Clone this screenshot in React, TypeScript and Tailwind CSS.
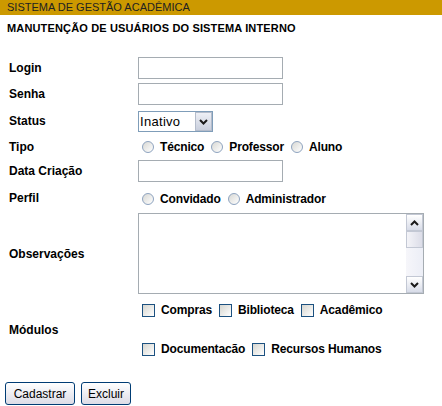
import React from "react";

const font = { fontFamily: '"Liberation Sans", Arial, sans-serif' };

function Radio() {
  return (
    <span className="inline-block w-[12px] h-[12px] rounded-full border border-[#8ea3bf] bg-gradient-to-br from-[#d8d8d4] to-white shrink-0" />
  );
}

function Check() {
  return (
    <span className="inline-block w-[13px] h-[13px] border border-[#1c5180] bg-gradient-to-br from-[#d6d6d0] to-white shrink-0" />
  );
}

function Chevron({ up }: { up?: boolean }) {
  return (
    <svg width="9" height="6" viewBox="0 0 9 6">
      <polyline
        points={up ? "1,5 4.5,1.5 8,5" : "1,1 4.5,4.5 8,1"}
        fill="none"
        stroke="#1a1a1a"
        strokeWidth="2"
      />
    </svg>
  );
}

function Label({ children }: { children: React.ReactNode }) {
  return <div className="pl-[9px] text-[12px] font-bold text-black">{children}</div>;
}

function TextBox() {
  return <div className="w-[145px] h-[22px] border border-[#a5acb2] bg-white" />;
}

function Opt({ children, kind }: { children: React.ReactNode; kind: "r" | "c" }) {
  return (
    <span className="inline-flex items-center">
      {kind === "r" ? <Radio /> : <Check />}
      <span className="ml-[6px] text-[12px] font-bold text-black tracking-[-0.15px]">{children}</span>
    </span>
  );
}

export default function App() {
  return (
    <div className="w-[442px] h-[406px] bg-white overflow-hidden" style={font}>
      <div className="h-[15px] bg-[#cc9900] pl-[7px] text-[11px] leading-[15px] text-[#222]">
        SISTEMA DE GESTÃO ACADÊMICA
      </div>
      <div className="pl-[7px] pt-[6px] h-[40px] text-[11px] font-bold leading-[15px] text-black tracking-[0.15px]">
        MANUTENÇÃO DE USUÁRIOS DO SISTEMA INTERNO
      </div>
      <div className="grid grid-cols-[138px_1fr]">
        <div className="h-[26px] flex items-center"><Label>Login</Label></div>
        <div className="h-[26px] flex items-center"><TextBox /></div>

        <div className="h-[26px] flex items-center"><Label>Senha</Label></div>
        <div className="h-[26px] flex items-center"><TextBox /></div>

        <div className="h-[27px] flex items-center"><Label>Status</Label></div>
        <div className="h-[27px] flex items-center pt-[2px]">
          <div className="w-[75px] h-[21px] border border-[#7f9db9] bg-white flex">
            <span className="flex-1 pl-[1px] text-[13px] leading-[19px] text-black tracking-[0.3px]">Inativo</span>
            <span className="w-[17px] h-[19px] border border-[#b4bccb] bg-gradient-to-b from-[#eef0f6] to-[#c9cfdd] flex items-center justify-center">
              <Chevron />
            </span>
          </div>
        </div>

        <div className="h-[25px] flex items-center"><Label>Tipo</Label></div>
        <div className="h-[25px] flex items-center pl-[4px] gap-[7px]">
          <Opt kind="r">Técnico</Opt>
          <Opt kind="r">Professor</Opt>
          <Opt kind="r">Aluno</Opt>
        </div>

        <div className="h-[24px] flex items-center"><Label>Data Criação</Label></div>
        <div className="h-[24px] flex items-center"><TextBox /></div>

        <div className="h-[30px] flex items-center"><Label>Perfil</Label></div>
        <div className="h-[30px] flex items-center pl-[4px] gap-[7px] pt-[2px]">
          <Opt kind="r">Convidado</Opt>
          <Opt kind="r">Administrador</Opt>
        </div>

        <div className="h-[81px] flex items-center"><Label>Observações</Label></div>
        <div className="h-[81px] flex">
          <div className="w-[286px] h-[81px] border border-[#a5acb2] bg-white flex justify-end">
            <div className="w-[17px] flex flex-col">
              <div className="h-[17px] border border-[#c3c8d4] bg-gradient-to-b from-white to-[#d8dce8] flex items-center justify-center">
                <Chevron up />
              </div>
              <div className="h-[17px] border border-[#c3c8d4] bg-gradient-to-r from-[#f4f4f8] to-[#dcdde8]" />
              <div className="flex-1 bg-gradient-to-r from-[#f6f6fa] to-[#eceef6]" />
              <div className="h-[17px] border border-[#c3c8d4] bg-gradient-to-b from-white to-[#d8dce8] flex items-center justify-center">
                <Chevron />
              </div>
            </div>
          </div>
        </div>

        <div className="h-[71px] flex items-center"><Label>Módulos</Label></div>
        <div className="h-[71px] flex flex-col pt-[6px] pl-[4px] gap-[19px]">
          <div className="h-[20px] flex items-center gap-[7px]">
            <Opt kind="c">Compras</Opt>
            <Opt kind="c">Biblioteca</Opt>
            <Opt kind="c">Acadêmico</Opt>
          </div>
          <div className="h-[20px] flex items-center gap-[7px]">
            <Opt kind="c">Documentacão</Opt>
            <Opt kind="c">Recursos Humanos</Opt>
          </div>
        </div>
      </div>
      <div className="flex gap-[6px] pl-[5px] pt-[17px]">
        <button className="w-[70px] h-[23px] border border-[#003c74] rounded-[3px] bg-gradient-to-b from-white to-[#dcdce6] text-[12px] text-black">
          Cadastrar
        </button>
        <button className="w-[50px] h-[23px] border border-[#003c74] rounded-[3px] bg-gradient-to-b from-white to-[#dcdce6] text-[12px] text-black">
          Excluir
        </button>
      </div>
    </div>
  );
}
